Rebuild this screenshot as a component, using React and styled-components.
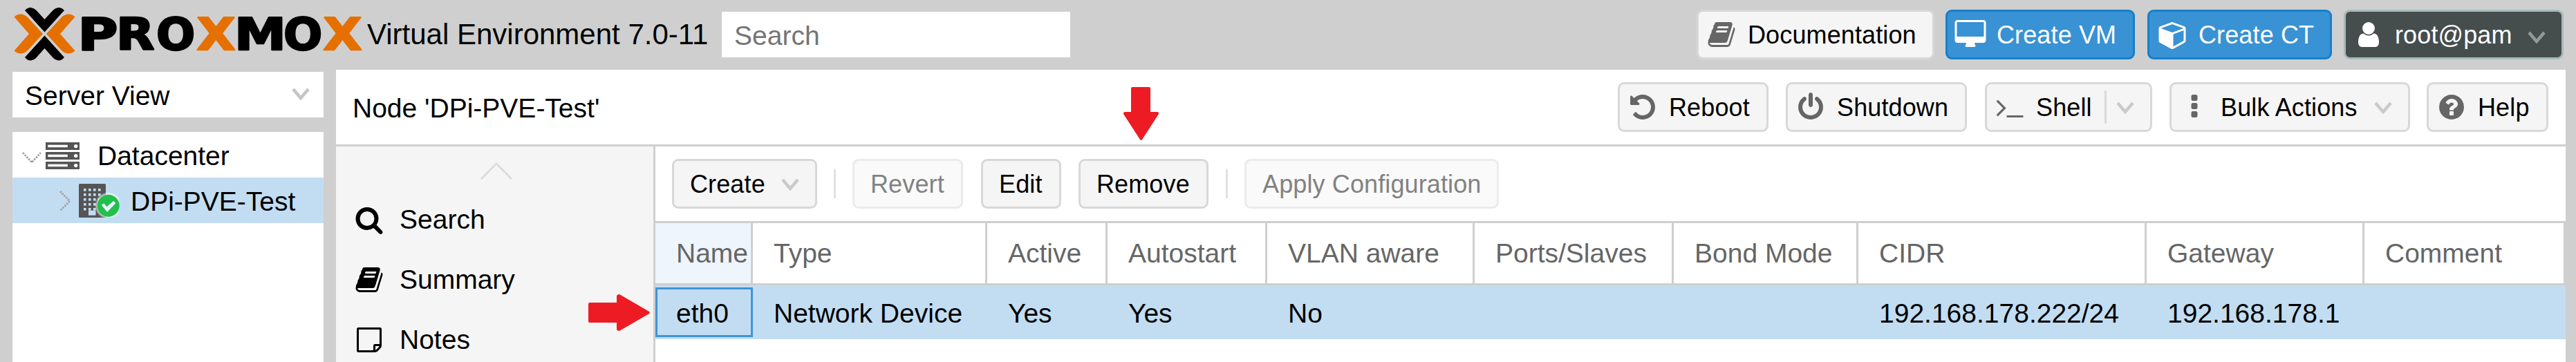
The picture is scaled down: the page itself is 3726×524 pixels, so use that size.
import React from "react";
import styled, { createGlobalStyle, css } from "styled-components";

const line = "#cfcfcf";
const selected = "#c2ddf2";

const GlobalStyle = createGlobalStyle`
  *, *::before, *::after { box-sizing: border-box; }
  html, body { margin: 0; padding: 0; }
  body { background: ${line}; overflow: hidden; }
`;

const Page = styled.div`
  position: relative;
  display: flex;
  flex-direction: column;
  width: 3726px;
  height: 524px;
  overflow: hidden;
  background: ${line};
  color: #000;
  font-family: "Liberation Sans", Arial, Helvetica, sans-serif;
  font-size: 39px;
  line-height: 45px;
  white-space: nowrap;
`;

const Header = styled.header`
  display: flex;
  align-items: center;
  flex: none;
  height: 101px;
  padding: 0 18px 1px 18px;
`;

const Logo = styled.svg`
  display: block;
  flex: none;
  width: 513px;
  height: 100px;
`;

const Version = styled.div`
  width: 513px;
  font-size: 42px;
  line-height: 48px;
`;

const SearchField = styled.input`
  width: 504px;
  height: 66px;
  padding: 3px 18px 0;
  border: 0;
  outline: 0;
  background: #fff;
  font: inherit;
  &::placeholder { color: #757575; opacity: 1; }
`;

const HeaderActions = styled.div`
  display: flex;
  gap: 17px;
  margin-left: auto;
`;

const tones = {
  plain: css`background: #f5f5f5; border-color: #d8d8d8; color: #000; --icon: #666; --chevron: #cacaca;`,
  blue: css`background: #3892d4; border-color: #157fcc; color: #fff; --icon: #fff;`,
  dark: css`background: #464d4d; border-color: #a9b9b9; color: #fff; --icon: #fff; --chevron: #949898;`,
  disabled: css`background: #fafafa; border-color: #ebebeb; color: #828282;`,
};

const ButtonBox = styled.button`
  display: flex;
  align-items: center;
  flex: none;
  width: ${(p) => p.$width}px;
  height: 72px;
  margin: 0 0 0 ${(p) => p.$nudge || 0}px;
  padding: 0 23px 0 ${(p) => (p.$icon ? 9 : 23)}px;
  border: 3px solid;
  border-radius: 9px;
  font-family: inherit;
  font-size: 36px;
  line-height: 42px;
  letter-spacing: 0.12px;
  white-space: nowrap;
  ${(p) => tones[p.$tone]}
`;

const ButtonText = styled.span`
  padding-top: 2px;
`;

const ButtonIcon = styled.svg`
  flex: none;
  width: 48px;
  height: 42px;
  margin-right: 14px;
  fill: var(--icon);
`;

const Chevron = styled.svg`
  flex: none;
  width: 26px;
  height: 18px;
  margin-left: auto;
  margin-top: ${(p) => p.$drop || 1}px;
  fill: none;
  stroke: var(--chevron, #c4c4c4);
  stroke-width: 4.5;
`;

const SplitLine = styled.span`
  width: 3px;
  height: 48px;
  margin-left: auto;
  margin-right: 14px;
  background: #dadada;
  & + svg { margin-left: 0; }
`;

const Body = styled.div`
  display: flex;
  flex: 1;
  min-height: 0;
  padding: 0 15px 0 18px;
`;

const Sidebar = styled.aside`
  display: flex;
  flex-direction: column;
  flex: none;
  width: 450px;
  margin-right: 18px;
  padding-top: 3px;
`;

const ViewSelect = styled.div`
  display: flex;
  align-items: center;
  flex: none;
  height: 66px;
  margin-bottom: 21px;
  padding: 0 20px 0 18px;
  background: #fff;
`;

const Label = styled.span`
  padding-top: 3px;
`;

const Tree = styled.div`
  flex: 1;
  background: #fff;
`;

const TreeRow = styled.div`
  display: flex;
  align-items: center;
  height: 66px;
  padding-left: ${(p) => p.$indent}px;
  background: ${(p) => (p.$selected ? selected : "#fff")};
`;

const Expander = styled.svg`
  flex: none;
  width: 28px;
  height: 30px;
  margin-right: ${(p) => p.$gap}px;
  fill: none;
  stroke: #a3a3a3;
  stroke-width: 2.8;
  stroke-dasharray: 2.6 1.4;
`;

const TreeIcon = styled.svg`
  flex: none;
  width: ${(p) => p.$width}px;
  height: 49px;
  margin-right: ${(p) => p.$gap}px;
  overflow: visible;
`;

const Main = styled.main`
  display: flex;
  flex-direction: column;
  flex: 1;
  min-width: 0;
  background: #fff;
`;

const TitleBar = styled.div`
  display: flex;
  align-items: center;
  flex: none;
  height: 111px;
  padding: 0 25px 0 24px;
  border-bottom: 3px solid ${line};
`;

const TitleActions = styled.div`
  display: flex;
  gap: 25px;
  margin-left: auto;
`;

const Content = styled.div`
  display: flex;
  flex: 1;
  min-height: 0;
`;

const Nav = styled.nav`
  flex: none;
  width: 462px;
  border-right: 3px solid ${line};
  background: #f5f5f5;
`;

const NavScroll = styled.div`
  display: flex;
  justify-content: center;
  height: 62px;
  padding: 23px 0 0 4px;
  svg {
    width: 46px;
    height: 26px;
    fill: none;
    stroke: #dcdcdc;
    stroke-width: 3;
  }
`;

const NavItem = styled.div`
  display: flex;
  align-items: center;
  height: 87px;
  padding-left: 24px;
`;

const NavIcon = styled.svg`
  flex: none;
  width: 48px;
  height: 42px;
  margin-right: 20px;
`;

const Panel = styled.section`
  display: flex;
  flex-direction: column;
  flex: 1;
  min-width: 0;
`;

const Toolbar = styled.div`
  display: flex;
  align-items: center;
  gap: 24px;
  height: 111px;
  padding-left: 24px;
  border-bottom: 3px solid ${line};
`;

const ToolbarLine = styled.span`
  width: 3px;
  height: 42px;
  margin-left: ${(p) => p.$nudge || 0}px;
  background: #e1e1e1;
`;

const columnsTemplate = "141px 339px 174px 231px 300px 288px 267px 417px 315px 291px";

const GridHead = styled.div`
  display: grid;
  grid-template-columns: ${columnsTemplate};
  height: 90px;
  border-bottom: 3px solid ${line};
  color: #666;
`;

const HeadCell = styled.div`
  display: flex;
  align-items: center;
  padding-left: 30px;
  border-right: 3px solid ${line};
  background: ${(p) => (p.$sorted ? "#eef5fc" : "#fff")};
`;

const GridRow = styled.div`
  display: grid;
  grid-template-columns: ${columnsTemplate};
  height: 78px;
  padding: 3px 0;
  background: ${selected};
`;

const Cell = styled.div`
  display: flex;
  align-items: center;
  padding: 3px 0 0 30px;
  box-shadow: ${(p) => (p.$focused ? "inset 0 0 0 3px #3f95d5" : "none")};
`;

const Annotation = styled.svg`
  position: absolute;
  left: ${(p) => p.$x}px;
  top: ${(p) => p.$y}px;
  fill: #ed1c24;
`;

const bookPath =
  "M1703 478q40 57 18 129l-275 906q-19 64-76.5 107.5t-122.5 43.5h-923q-77 0-148.5-53.5t-99.5-131.5q-24-67-2-127 0-4 3-27t4-37q1-8-3-21.5t-3-19.5q2-11 8-21t16.5-23.5 16.5-23.5q23-38 45-91.5t30-91.5q3-10 .5-30t-.5-28q3-11 17-28t17-23q21-36 42-92t25-90q1-9-2.5-32t.5-28q4-13 22-30.5t22-22.5q19-26 42.5-84.5t27.5-96.5q1-8-3-25.5t-2-26.5q2-8 9-18t18-23 17-21q8-12 16.5-30.5t15-35 16-36 19.5-32 26.5-23.5 36-11.5 47.5 5.5l-1 3q38-9 51-9h761q74 0 114 56t18 130l-274 906q-36 119-71.5 153.5t-128.5 34.5h-869q-27 0-38 15-11 16-1 43 24 70 144 70h923q29 0 56-15.5t35-41.5l300-987q7-22 5-57 38 15 59 43zm-1064 2q-4 13 2 22.5t20 9.5h608q13 0 25.5-9.5t16.5-22.5l21-64q4-13-2-22.5t-20-9.5h-608q-13 0-25.5 9.5t-16.5 22.5zm-83 256q-4 13 2 22.5t20 9.5h608q13 0 25.5-9.5t16.5-22.5l21-64q4-13-2-22.5t-20-9.5h-608q-13 0-25.5 9.5t-16.5 22.5z";

const icons = {
  book: { d: bookPath },
  desktop: {
    d: "M1728 992v-832q0-13-9.5-22.5t-22.5-9.5h-1600q-13 0-22.5 9.5t-9.5 22.5v832q0 13 9.5 22.5t22.5 9.5h1600q13 0 22.5-9.5t9.5-22.5zm128-832v1088q0 66-47 113t-113 47h-544q0 37 16 77.5t32 71 16 43.5q0 26-19 45t-45 19h-512q-26 0-45-19t-19-45q0-14 16-44t32-70 16-78h-544q-66 0-113-47t-47-113v-1088q0-66 47-113t113-47h1600q66 0 113 47t47 113z",
  },
  cube: {
    x: -192,
    d: "M896 1629l640-349v-636l-640 233v752zm-64-865l698-254-698-254-698 254zm832-252v768q0 35-18 65t-49 47l-704 384q-28 16-61 16t-61-16l-704-384q-31-17-49-47t-18-65v-768q0-40 23-73t61-47l704-256q22-8 44-8t44 8l704 256q38 14 61 47t23 73z",
  },
  user: {
    d: "M1536 1399q0 109-62.5 187t-150.5 78h-854q-88 0-150.5-78t-62.5-187q0-85 8.5-160.5t31.5-152 58.5-131 94-89 134.5-34.5q131 128 313 128t313-128q76 0 134.5 34.5t94 89 58.5 131 31.5 152 8.5 160.5zm-256-887q0 159-112.5 271.5t-271.5 112.5-271.5-112.5-112.5-271.5 112.5-271.5 271.5-112.5 271.5 112.5 112.5 271.5z",
  },
  undo: {
    d: "M1664 896q0 156-61 298t-164 245-245 164-298 61q-172 0-327-72.5t-264-204.5q-7-10-6.5-22.5t8.5-20.5l137-138q10-9 25-9 16 2 23 12 73 95 179 147t225 52q104 0 198.5-40.5t163.5-109.5 109.5-163.5 40.5-198.5-40.5-198.5-109.5-163.5-163.5-109.5-198.5-40.5q-98 0-188 35.5t-160 101.5l137 138q31 30 14 69-17 40-59 40h-448q-26 0-45-19t-19-45v-448q0-42 40-59 39-17 69 14l130 129q107-101 244.5-156.5t284.5-55.5q156 0 298 61t245 164 164 245 61 298z",
  },
  power: {
    d: "M1664 896q0 156-61 298t-164 245-245 164-298 61-298-61-245-164-164-245-61-298q0-182 80.5-343t226.5-270q43-32 95.5-25t83.5 50q32 42 24.5 94.5t-49.5 84.5q-98 74-151.5 181t-53.5 228q0 104 40.5 198.5t109.5 163.5 163.5 109.5 198.5 40.5 198.5-40.5 163.5-109.5 109.5-163.5 40.5-198.5q0-121-53.5-228t-151.5-181q-42-32-49.5-84.5t24.5-94.5q31-43 84-50t95 25q146 109 226.5 270t80.5 343zm-640-768v640q0 52-38 90t-90 38-90-38-38-90v-640q0-52 38-90t90-38 90 38 38 90z",
  },
  terminal: {
    d: "M649 983l-466 466q-10 10-23 10t-23-10l-50-50q-10-10-10-23t10-23l393-393-393-393q-10-10-10-23t10-23l50-50q10-10 23-10t23 10l466 466q10 10 10 23t-10 23zm1079 457v64q0 14-9 23t-23 9h-960q-14 0-23-9t-9-23v-64q0-14 9-23t23-9h960q14 0 23 9t9 23z",
  },
  dots: {
    d: "M1088 1248v192q0 40-28 68t-68 28h-192q-40 0-68-28t-28-68v-192q0-40 28-68t68-28h192q40 0 68 28t28 68zm0-512v192q0 40-28 68t-68 28h-192q-40 0-68-28t-28-68v-192q0-40 28-68t68-28h192q40 0 68 28t28 68zm0-512v192q0 40-28 68t-68 28h-192q-40 0-68-28t-28-68v-192q0-40 28-68t68-28h192q40 0 68 28t28 68z",
  },
  question: {
    d: "M1024 1376v-192q0-14-9-23t-23-9h-192q-14 0-23 9t-9 23v192q0 14 9 23t23 9h192q14 0 23-9t9-23zm256-672q0-88-55.5-163t-138.5-116-170-41q-243 0-371 213-15 24 8 42l132 100q7 6 19 6 16 0 25-12 53-68 86-92 34-24 86-24 48 0 85.5 26t37.5 59q0 38-20 61t-68 45q-63 28-115.5 86.5t-52.5 125.5v36q0 14 9 23t23 9h192q14 0 23-9t9-23q0-19 21.5-49.5t54.5-49.5q32-18 49-28.5t46-35 44.5-48 28-60.5 12.5-81zm384 192q0 209-103 385.5t-279.5 279.5-385.5 103-385.5-103-279.5-279.5-103-385.5 103-385.5 279.5-279.5 385.5-103 385.5 103 279.5 279.5 103 385.5z",
  },
  search: {
    d: "M1216 832q0-185-131.5-316.5t-316.5-131.5-316.5 131.5-131.5 316.5 131.5 316.5 316.5 131.5 316.5-131.5 131.5-316.5zm512 832q0 52-38 90t-90 38q-54 0-90-38l-343-342q-179 124-399 124-143 0-273.5-55.5t-225-150-150-225-55.5-273.5 55.5-273.5 150-225 225-150 273.5-55.5 273.5 55.5 225 150 150 225 55.5 273.5q0 220-124 399l343 343q37 37 37 90z",
  },
  note: {
    d: "M224 128h1344q40 0 68 28t28 68v1024q0 40-20 88t-48 76l-184 184q-28 28-76 48t-88 20h-1024q-40 0-68-28t-28-68v-1344q0-40 28-68t68-28zM256 256v1280h896v-288q0-40 28-68t68-28h288v-896zM1280 1280v248q29-10 41-22l185-185q12-12 22-41z",
  },
};

function Glyph({ as: Box, name }) {
  const { x = -128, d } = icons[name];
  return (
    <Box viewBox={`${x} 0 2048 1792`} aria-hidden="true">
      <path fillRule="evenodd" d={d} />
    </Box>
  );
}

function Down({ drop }) {
  return (
    <Chevron $drop={drop} viewBox="0 0 26 18" aria-hidden="true">
      <path d="M2 2L13 15L24 2" />
    </Chevron>
  );
}

function Button({ children, icon, menu, split, width, nudge, drop, tone = "plain" }) {
  return (
    <ButtonBox type="button" disabled={tone === "disabled"} $width={width} $nudge={nudge} $tone={tone} $icon={!!icon}>
      {icon && <Glyph as={ButtonIcon} name={icon} />}
      <ButtonText>{children}</ButtonText>
      {split && <SplitLine />}
      {(menu || split) && <Down drop={drop} />}
    </ButtonBox>
  );
}

const wordmark = [
  ["P", 112.5, 58],
  ["R", 168, 55.5],
  ["O", 226, 56.3],
  ["X", 284.5, 56, "#e57000"],
  ["M", 339, 75],
  ["O", 410, 56.3],
  ["X", 467.5, 56, "#e57000"],
];

function ProxmoxLogo() {
  return (
    <Logo viewBox="18 0 513 100" role="img" aria-label="Proxmox">
      <path d="M36 15Q40 10.5 45 11Q49 11.5 52 14.5L64.5 28L77 14.5Q80 11.5 84 11Q89 10.5 93 15L64.5 46.5Z" />
      <path d="M36 83Q40 88 45 87.5Q49 87 52 84L64.5 70L77 84Q80 87 84 87.5Q89 88 93 83L64.5 51.5Z" />
      <g fill="#e57000">
        <path d="M20.5 24.5Q25 20 31 20.5Q36 21 40 25L62 49L40 73Q36 77 31 77.5Q25 78 20.5 73.5L42 49Z" />
        <path d="M108.5 24.5Q104 20 98 20.5Q93 21 89 25L67 49L89 73Q93 77 98 77.5Q104 78 108.5 73.5L87 49Z" />
      </g>
      <text y="72" fontFamily='"DejaVu Sans", sans-serif' fontWeight="700" fontSize="63.5" strokeWidth="2.4" strokeLinejoin="round">
        {wordmark.map(([letter, x, width, color = "#000"]) => (
          <tspan key={x} x={x} textLength={width} lengthAdjust="spacingAndGlyphs" fill={color} stroke={color}>
            {letter}
          </tspan>
        ))}
      </text>
    </Logo>
  );
}

function ServerIcon() {
  return (
    <TreeIcon $width={49} $gap={26} viewBox="0 0 49 49" aria-hidden="true">
      {[6, 20, 34].map((y) => (
        <g key={y}>
          <rect y={y} width="49" height="11" fill="#555" />
          <rect x="3.3" y={y + 3.7} width="28.5" height="3.5" fill="#fff" />
          <circle cx="43.7" cy={y + 5.6} r="2.7" fill="#fff" />
        </g>
      ))}
    </TreeIcon>
  );
}

function NodeIcon() {
  const windows = [];
  for (let row = 0; row < 5; row += 1) {
    for (let col = 0; col < 4; col += 1) windows.push([7 + col * 7, 7 + row * 7]);
  }
  return (
    <TreeIcon $width={39} $gap={36} viewBox="0 0 39 49" aria-hidden="true">
      <defs>
        <radialGradient id="halo">
          <stop offset="0.75" stopColor="#fff" stopOpacity="0.95" />
          <stop offset="1" stopColor="#fff" stopOpacity="0" />
        </radialGradient>
        <clipPath id="haloArea">
          <rect x="14" y="8" width="44" height="41" />
        </clipPath>
      </defs>
      <rect width="39" height="49" rx="1.5" fill="#555" />
      {windows.map(([x, y]) => (
        <rect key={`${x}-${y}`} x={x} y={y} width="3.6" height="3.6" fill={selected} />
      ))}
      <rect x="14" y="38.7" width="10.5" height="7" fill={selected} />
      <circle cx="42.7" cy="31.7" r="20" fill="url(#halo)" clipPath="url(#haloArea)" />
      <circle cx="42.7" cy="31.7" r="16" fill="#21bf4b" />
      <path d="M32.7 30.8L36.5 28.3L40.2 33.3L50.5 24.7L53.3 28.3L41 41Z" fill="#e8f1fa" />
    </TreeIcon>
  );
}

const columns = [
  ["Name", "eth0"],
  ["Type", "Network Device"],
  ["Active", "Yes"],
  ["Autostart", "Yes"],
  ["VLAN aware", "No"],
  ["Ports/Slaves", ""],
  ["Bond Mode", ""],
  ["CIDR", "192.168.178.222/24"],
  ["Gateway", "192.168.178.1"],
  ["Comment", ""],
];

const navItems = [
  ["search", "Search"],
  ["book", "Summary"],
  ["note", "Notes"],
];

export default function App() {
  return (
    <Page>
      <GlobalStyle />
      <Header>
        <ProxmoxLogo />
        <Version>Virtual Environment 7.0-11</Version>
        <SearchField placeholder="Search" />
        <HeaderActions>
          <Button icon="book" width={344}>Documentation</Button>
          <Button icon="desktop" tone="blue" width={274} nudge={-1}>Create VM</Button>
          <Button icon="cube" tone="blue" width={267} nudge={1}>Create CT</Button>
          <Button icon="user" tone="dark" width={318} menu drop={8}>root@pam</Button>
        </HeaderActions>
      </Header>
      <Body>
        <Sidebar>
          <ViewSelect>
            <Label>Server View</Label>
            <Down drop={-3} />
          </ViewSelect>
          <Tree>
            <TreeRow $indent={14}>
              <Expander $gap={6} viewBox="0 0 28 30" aria-hidden="true">
                <path d="M1 12L14 26L27 12" />
              </Expander>
              <ServerIcon />
              <Label>Datacenter</Label>
            </TreeRow>
            <TreeRow $indent={62} $selected>
              <Expander $gap={6} viewBox="0 0 28 30" aria-hidden="true">
                <path d="M7 2L21 16L7 30" />
              </Expander>
              <NodeIcon />
              <Label>DPi-PVE-Test</Label>
            </TreeRow>
          </Tree>
        </Sidebar>
        <Main>
          <TitleBar>
            <Label>Node 'DPi-PVE-Test'</Label>
            <TitleActions>
              <Button icon="undo" width={218}>Reboot</Button>
              <Button icon="power" width={262}>Shutdown</Button>
              <Button icon="terminal" width={242} nudge={1} split>Shell</Button>
              <Button icon="dots" width={348} menu>Bulk Actions</Button>
              <Button icon="question" width={176} nudge={-1}>Help</Button>
            </TitleActions>
          </TitleBar>
          <Content>
            <Nav>
              <NavScroll>
                <svg viewBox="0 0 46 26" aria-hidden="true">
                  <path d="M1 24L23 2L45 24" />
                </svg>
              </NavScroll>
              {navItems.map(([icon, text]) => (
                <NavItem key={text}>
                  <Glyph as={NavIcon} name={icon} />
                  <span>{text}</span>
                </NavItem>
              ))}
            </Nav>
            <Panel>
              <Toolbar>
                <Button width={210} menu>Create</Button>
                <ToolbarLine />
                <Button width={160} tone="disabled">Revert</Button>
                <Button width={116} nudge={2}>Edit</Button>
                <Button width={188} nudge={1}>Remove</Button>
                <ToolbarLine $nudge={1} />
                <Button width={368} tone="disabled">Apply Configuration</Button>
              </Toolbar>
              <GridHead>
                {columns.map(([title], i) => (
                  <HeadCell key={title} $sorted={i === 0}>{title}</HeadCell>
                ))}
              </GridHead>
              <GridRow>
                {columns.map(([title, value], i) => (
                  <Cell key={title} $focused={i === 0}>{value}</Cell>
                ))}
              </GridRow>
            </Panel>
          </Content>
        </Main>
      </Body>
      <Annotation $x={1625} $y={126} width="51" height="77" viewBox="0 0 51 77" aria-hidden="true">
        <path d="M13 0H37Q39 0 39 2V36H49Q51 36 51 39L27 76Q25.5 78 24 76L0 39Q0 36 2 36H11V2Q11 0 13 0Z" />
      </Annotation>
      <Annotation $x={851} $y={426} width="89" height="53" viewBox="0 0 89 53" aria-hidden="true">
        <path d="M0 14Q0 12 2 12H41V2Q42 0 45 0L88 25Q89.5 26.5 88 28L45 53Q42 53 41 51V41H2Q0 41 0 39Z" />
      </Annotation>
    </Page>
  );
}
